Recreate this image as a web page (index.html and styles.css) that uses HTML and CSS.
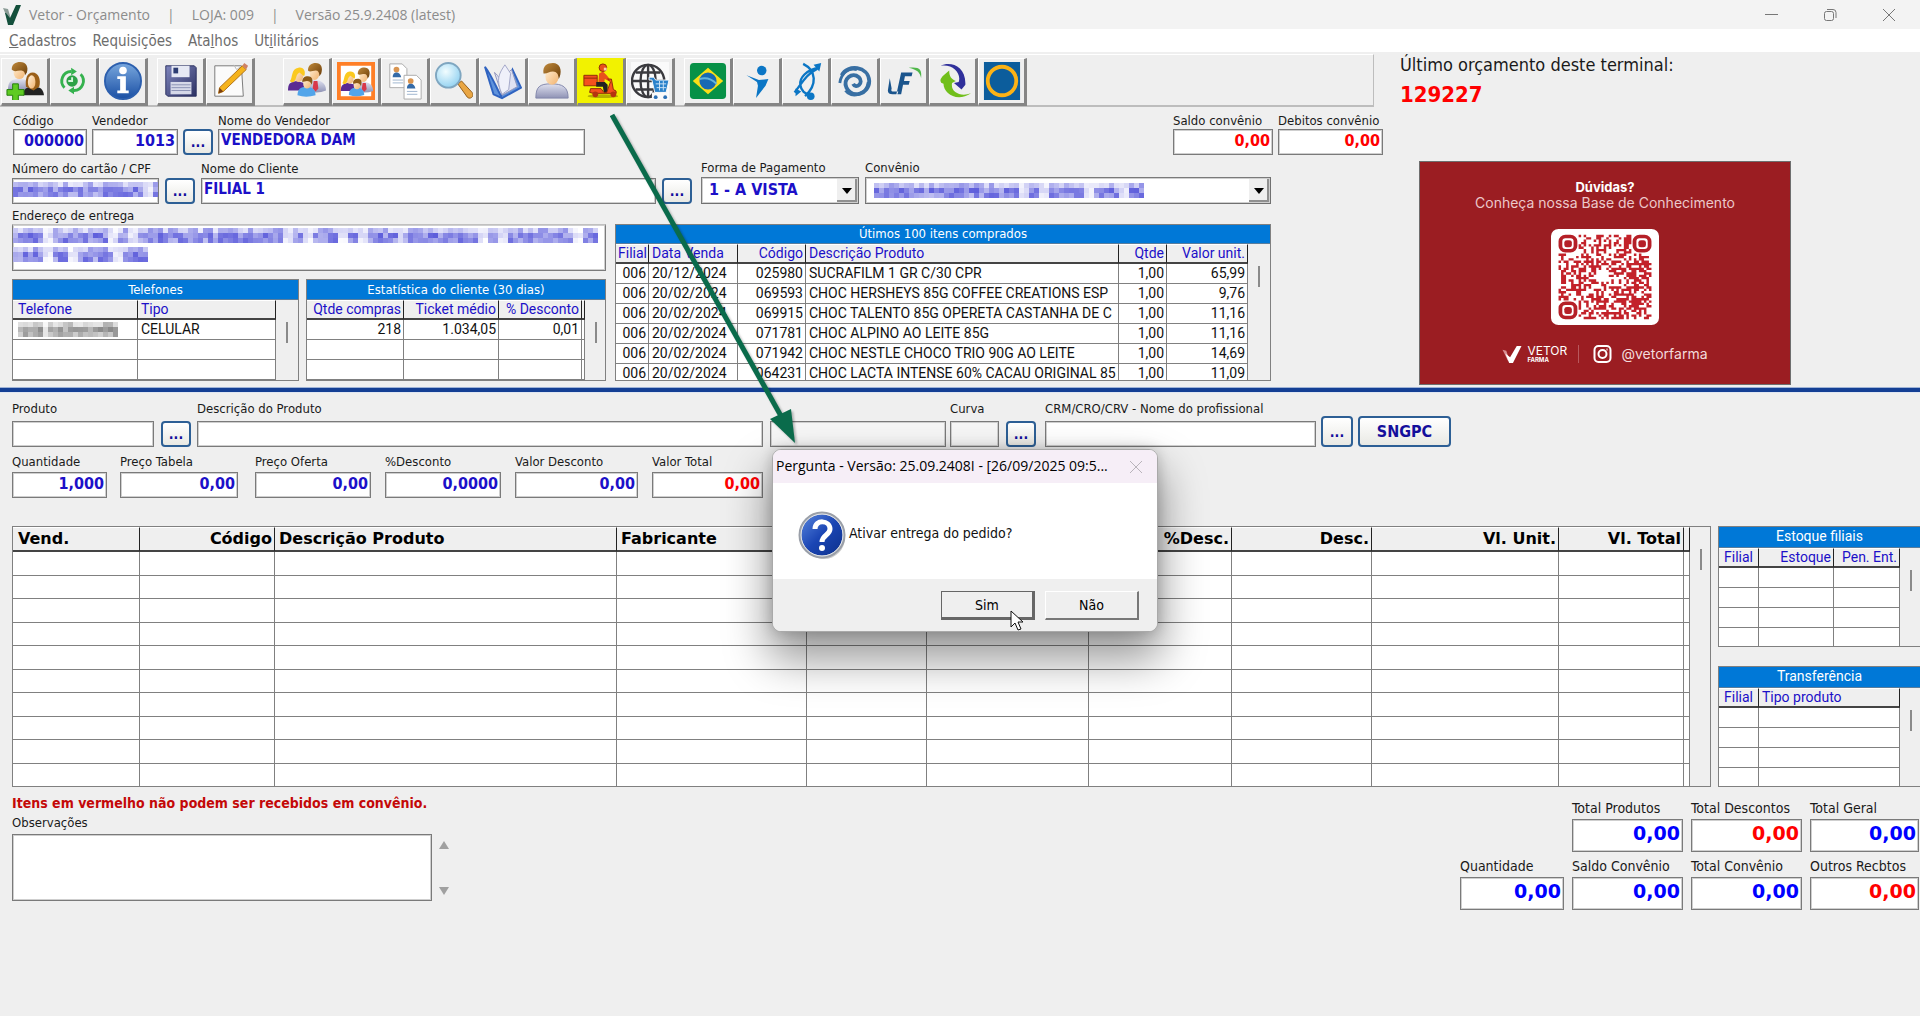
FILE: index.html
```html
<!DOCTYPE html>
<html lang="pt-BR">
<head>
<meta charset="utf-8">
<title>Vetor - Orçamento</title>
<link rel="stylesheet" href="styles.css">
</head>
<body>
<svg class="defs" aria-hidden="true">
  <defs>
    <linearGradient id="shirt" x1="0" y1="0" x2="0" y2="1"><stop offset="0" stop-color="#dfe1ef"/><stop offset="1" stop-color="#8f93b5"/></linearGradient>
    <linearGradient id="hair" x1="0" y1="0" x2="1" y2="1"><stop offset="0" stop-color="#c08a3c"/><stop offset="1" stop-color="#6b3d08"/></linearGradient>
    <linearGradient id="skin" x1="0" y1="0" x2="1" y2="1"><stop offset="0" stop-color="#fff0d8"/><stop offset="1" stop-color="#f2b26c"/></linearGradient>
    <linearGradient id="blueBall" x1="0" y1="0" x2="0" y2="1"><stop offset="0" stop-color="#79a8de"/><stop offset="1" stop-color="#1a4fa4"/></linearGradient>
    <linearGradient id="floppy" x1="0" y1="0" x2="1" y2="1"><stop offset="0" stop-color="#7f86bd"/><stop offset="1" stop-color="#2c3163"/></linearGradient>
    <radialGradient id="lens" cx=".4" cy=".35" r=".7"><stop offset="0" stop-color="#f2fdff"/><stop offset="1" stop-color="#8fd0f0"/></radialGradient>
    <linearGradient id="question" x1="0" y1="0" x2="1" y2="1"><stop offset="0" stop-color="#5c8ae0"/><stop offset=".5" stop-color="#1a45b4"/><stop offset="1" stop-color="#0c2f88"/></linearGradient>
    <g id="family">
      <path d="M19 30c0-8 3-11 9-11s12 3 12 11q-10 4-21 0z" fill="url(#shirt)"/>
      <path d="M27 20h4l1 8-3 3-3-3z" fill="#d8384a"/>
      <ellipse cx="28" cy="12" rx="5" ry="7" fill="url(#skin)"/>
      <path d="M21 9c0-6 4-8 8-8 6 0 8 5 6 11l-2 3c0-4-1-6-4-6s-6 2-8 0z" fill="url(#hair)"/>
      <path d="M0 30c0-7 2-9 9-10l8 2v8z" fill="#5b2a93"/>
      <ellipse cx="11" cy="15" rx="5" ry="6" fill="url(#skin)"/>
      <path d="M2 20c3-3 1-13 9-14 6-1 8 5 6 9l-5-4c-4 2-3 8-6 10-2 1-3 0-4-1z" fill="#fbc91f"/>
      <path d="M10 35c0-7 4-9 9-9s10 2 10 9q-10 3-19 0z" fill="#52a5ea"/>
      <ellipse cx="20" cy="23" rx="4" ry="5" fill="url(#skin)"/>
      <path d="M15 21c0-4 2-6 6-6s6 3 4 9c-1-3-3-4-5-4s-3 1-5 1z" fill="#8d5a16"/>
    </g>
  </defs>
</svg>

<header class="titlebar">
  <svg class="logo" viewBox="0 0 20 22"><path d="M1 4l5 1 3 10-2 3z" fill="#8b9c96"/><path d="M4 9l4 5L14 1h5L11 21H6L3 9z" fill="#14503c"/></svg>
  <span class="app-title">Vetor - Orçamento</span><span>|</span><span class="store">LOJA: 009</span><span>|</span><span>Versão 25.9.2408 (latest)</span>
  <div class="window-buttons">
    <button type="button" aria-label="Minimizar"><svg viewBox="0 0 14 14"><path d="M1 6.500h13" stroke="#777" fill="none"/></svg></button>
    <button type="button" aria-label="Restaurar"><svg viewBox="0 0 14 14"><rect x="1.500" y="3.500" width="9" height="9" rx="2" fill="none" stroke="#777"/><path d="M4 1.500h6q3 0 3 3V10" fill="none" stroke="#777"/></svg></button>
    <button type="button" aria-label="Fechar"><svg viewBox="0 0 14 14"><path d="M1 1l12 12M13 1L1 13" stroke="#777" fill="none"/></svg></button>
  </div>
</header>

<nav class="menubar">
  <a href="#"><u>C</u>adastros</a><a href="#">Requisições</a><a href="#">Ata<u>l</u>hos</a><a href="#">Ut<u>i</u>litários</a>
</nav>

<main>
<section class="top">
  <div class="top-left">
    <div class="toolbar">
      <div class="tool-group">
        <button type="button" aria-label="Novo cliente"><svg viewBox="0 0 40 40"><path d="M2 30c0-10 4-12 12-12s12 2 12 12z" fill="url(#shirt)"/><ellipse cx="14" cy="11" rx="6" ry="7" fill="url(#skin)"/><path d="M6 8c0-6 4-8 9-8 6 0 9 5 7 11l-2 3c0-4-2-5-5-5s-6 2-9-1z" fill="url(#hair)"/><path d="M18 35c0-7 4-9 11-9s10 2 11 9z" fill="#222"/><path d="M21 26c-1-8 1-15 7-15s9 7 7 15l-6 4z" fill="#9a5f18"/><ellipse cx="27" cy="21" rx="4" ry="7" fill="url(#skin)"/><path d="M7 23h6v6h6v6h-6v6H7v-6H1v-6h6z" fill="#5fcb23" stroke="#227c0c"/></svg></button>
        <button type="button" aria-label="Atualizar"><svg viewBox="0 0 40 40"><path d="M10 27a10 10 0 0 1 7-17M27 13a10 10 0 0 1-7 17" fill="none" stroke="#35b24e" stroke-width="3"/><path d="M17 6l6 4-6 4zM20 34l-6-4 6-4z" fill="#35b24e"/><circle cx="18" cy="20" r="6" fill="#2da247"/><path d="M18 16v4h-4" stroke="#d7f5dc" fill="none" stroke-width="2"/></svg></button>
        <button type="button" aria-label="Informações"><svg viewBox="0 0 40 40"><circle cx="20" cy="20" r="19" fill="url(#blueBall)" stroke="#2c5fae" stroke-width="2"/><circle cx="20" cy="9" r="4" fill="#fff"/><path d="M14 15h9v15h3v3H14v-3h3V18h-3z" fill="#fff"/></svg></button>
      </div>
      <div class="tool-group">
        <button type="button" aria-label="Salvar"><svg viewBox="0 0 40 40"><path d="M4 4h30l2 2v30H6l-2-2z" fill="url(#floppy)" stroke="#2b3060"/><path d="M10 4h19v12H10z" fill="#e6e9f4"/><path d="M12 6h5v6h-5z" fill="#2d3d73"/><path d="M9 21h22v13H9z" fill="#d5d8e8"/><path d="M10 24h20M10 27h20M10 30h20" stroke="#8990b3"/></svg></button>
        <button type="button" aria-label="Editar"><svg viewBox="0 0 40 40"><path d="M4 4h28l2 32H4z" fill="#fbfbfb" stroke="#777"/><path d="M24 3l3 5 4-3" fill="none" stroke="#bbb"/><path d="M8 33l1-6L33 4l4 4-24 23z" fill="#f5b31c" stroke="#b06f10"/><path d="M8 33l1-6 4 4z" fill="#7a3e10"/><path d="M33 4l2-3 4 3-2 4z" fill="#cf8264"/></svg></button>
      </div>
      <div class="tool-group">
        <button type="button" aria-label="Família"><svg viewBox="0 0 40 40"><use href="#family"/></svg></button>
        <button type="button" aria-label="Família em destaque"><svg viewBox="0 0 40 40"><path d="M2 2h36v36H2z" fill="#fff" stroke="#ff7f27" stroke-width="4"/><g transform="translate(4 5) scale(.85)"><use href="#family"/></g></svg></button>
        <button type="button" aria-label="Duplicar cadastro"><svg viewBox="0 0 40 40"><g id="page" transform="translate(3 1)"><path d="M1 1h13l5 5v20H1z" fill="#fff" stroke="#aaa"/><circle cx="8" cy="7" r="3" fill="#d99551"/><path d="M4 15q0-5 4-5t5 5z" fill="#346ba8"/><path d="M4 18h11M4 21h11" stroke="#9db4cf"/></g><use href="#page" transform="translate(15 12)"/></svg></button>
        <button type="button" aria-label="Pesquisar"><svg viewBox="0 0 40 40"><path d="M24 23l4-3 11 12c3 4-2 8-5 5z" fill="#e9a644" stroke="#8f5b17"/><circle cx="14" cy="14" r="13" fill="url(#lens)" stroke="#7fa6c0" stroke-width="2"/></svg></button>
        <button type="button" aria-label="Catálogo"><svg viewBox="0 0 40 40"><path d="M1 5l9 29 9 4 20-11L30 8l-8 20-4 8C12 25 8 14 1 5z" fill="#5f93dc" stroke="#2f63c0" stroke-width="2"/><path d="M11 11l8 24L35 26 29 8c-5 4-7 8-9 20-2-8-4-13-9-17z" fill="#dfe2f2" stroke="#9095ba"/><path d="M19 34C12 18 16 12 22 3l6 9-2 17z" fill="#eff0fa" stroke="#a0a4c6"/></svg></button>
        <button type="button" aria-label="Cliente"><svg viewBox="0 0 40 40"><path d="M3 38c0-12 4-15 16-15s18 3 18 15z" fill="url(#shirt)" stroke="#8186aa"/><ellipse cx="20" cy="15" rx="7" ry="9" fill="url(#skin)"/><path d="M11 12c-1-8 4-11 10-11 7 0 10 7 7 15l-1 2c0-5-2-8-6-8s-7 3-10 2z" fill="url(#hair)"/></svg></button>
        <button type="button" class="delivery" aria-label="Entrega"><svg viewBox="0 0 40 40"><ellipse cx="22" cy="36" rx="16" ry="2" fill="#b5b000"/><path d="M2 14h14v11H2z" fill="#f4511e" stroke="#8c2b08"/><path d="M2 17h14" stroke="#8c2b08"/><path d="M18 12l4-2 4 4 4 5-2 1-4-2-1 6h-6z" fill="#e8501c"/><circle cx="22" cy="6" r="4" fill="#e8501c" stroke="#8c2b08"/><path d="M23 6h3v3h-3z" fill="#ffd2a8"/><path d="M15 21h9l3 3v8h-4l-1-6h-7z" fill="#222"/><path d="M9 28h11l3 4h3l4-11-3-3h4l2 11q4 1 3 4H12l-4-1z" fill="#f4511e" stroke="#8c2b08"/><circle cx="14" cy="34" r="3" fill="#b53510"/><circle cx="33" cy="34" r="3" fill="#b53510"/></svg></button>
        <button type="button" aria-label="Loja virtual"><svg viewBox="0 0 40 40"><path d="M0 0h40v40H0z" fill="#fafafa"/><g fill="none" stroke="#3b3b3f" stroke-width="2.500"><circle cx="18" cy="20" r="17"/><ellipse cx="18" cy="20" rx="8" ry="17"/><path d="M18 3v34M2 20h33M5 11h26M5 29h26"/></g><path d="M19 16h5l2 3h14l-3 13H25l-3-13h-3z" fill="#2a82cb" stroke="#fafafa"/><path d="M26 23h11M27 27h10M30 20v10M34 20v10" stroke="#cfe5f7"/><path d="M22 32h17v8H22z" fill="#fafafa"/><circle cx="26" cy="37" r="2" fill="#2a6fb5"/><circle cx="36" cy="37" r="2" fill="#2a6fb5"/></svg></button>
      </div>
      <div class="tool-group">
        <button type="button" aria-label="Brasil"><svg viewBox="0 0 40 40"><rect x="1" y="1" width="38" height="38" rx="4" fill="#079147"/><path d="M20 6l16 14-16 14L4 20z" fill="#fade17"/><circle cx="20" cy="20" r="9" fill="#1769b3"/><path d="M11 18q10-3 18 5" stroke="#63b4dc" stroke-width="2" fill="none"/></svg></button>
        <button type="button" aria-label="Convênio esportivo"><svg viewBox="0 0 40 40"><circle cx="25" cy="9" r="5" fill="#0b76c5"/><path d="M9 14l13 5 10-1-3 7-10 13 2-13-1-4z" fill="#0b76c5"/></svg></button>
        <button type="button" aria-label="Convênio genético"><svg viewBox="0 0 40 40"><path d="M17 2c14 7 15 22 2 34M34 6C20 8 13 17 14 24s5 9 10 11M32 7C20 13 16 22 8 32" fill="none" stroke="#0b76c5" stroke-width="2.500"/><circle cx="25" cy="36" r="4" fill="#0b76c5"/><path d="M28 3l8-2-2 9zM9 28l6 3-6 5z" fill="#0b76c5"/></svg></button>
        <button type="button" aria-label="Convênio espiral"><svg viewBox="0 0 40 40"><path d="M6 14C12 2 34 4 35 20c0 14-18 19-24 7-4-9 6-17 13-11 6 6-3 13-6 7" fill="none" stroke="#386fa3" stroke-width="4"/><path d="M4 22C6 10 14 6 22 8M10 30c6 9 22 5 24-9" fill="none" stroke="#386fa3" stroke-width="3"/></svg></button>
        <button type="button" aria-label="Convênio LF"><svg viewBox="0 0 40 40"><path d="M5 17L3 30c0 3 2 4 5 4h5l1-3H8q-2 0-1-3zM17 11h12l-1 4h-7l-1 5h6l-1 4h-6l-2 10h-5z" fill="#1b558d"/><path d="M25 6c11-1 14 1 13 11-1-6-4-9-13-11z" fill="#4eb748"/></svg></button>
        <button type="button" aria-label="Convênio troca"><svg viewBox="0 0 40 40"><path d="M7 4C17-1 34 4 33 24l-4 5-8-7 5-1C29 12 20 2 7 4z" fill="#30309b"/><path d="M16 9L9 15q-5 6 1 8c0 10 14 20 29 10-11 4-22-1-20-11l4-2c-5-2-7-5-7-11z" fill="#71bf1b"/></svg></button>
        <button type="button" aria-label="Convênio anel"><svg viewBox="0 0 40 40"><path d="M1 0h38v40H1z" fill="#0c5d9c"/><circle cx="20" cy="20" r="15" fill="none" stroke="#fbb216" stroke-width="4"/></svg></button>
      </div>
    </div>

    <form class="seller-row">
      <div class="field w-code"><label for="codigo">Código</label><input id="codigo" class="num" value="000000"></div>
      <div class="field w-seller"><label for="vendedor">Vendedor</label><input id="vendedor" class="num" value="1013"></div>
      <button type="button" class="more" aria-label="Buscar vendedor">...</button>
      <div class="field w-name"><label for="nomevend">Nome do Vendedor</label><input id="nomevend" value="VENDEDORA DAM"></div>
      <div class="field w-balance push"><label for="saldo">Saldo convênio</label><input id="saldo" class="num red" value="0,00"></div>
      <div class="field w-debit"><label for="debitos">Debitos convênio</label><input id="debitos" class="num red" value="0,00"></div>
    </form>

    <form class="client-row">
      <div class="field w-card"><label for="cartao">Número do cartão / CPF</label><div class="masked"><input id="cartao"><svg class="mosaic" data-text="11111111100000 1" data-cols="29"></svg></div></div>
      <button type="button" class="more" aria-label="Buscar cartão">...</button>
      <div class="field grow"><label for="nomecli">Nome do Cliente</label><input id="nomecli" value="FILIAL 1"></div>
      <button type="button" class="more" aria-label="Buscar cliente">...</button>
      <div class="field w-pay"><label for="forma">Forma de Pagamento</label><div class="combo"><select id="forma"><option>1 - A VISTA</option></select><span></span></div></div>
      <div class="field w-plan"><label for="convenio">Convênio</label><div class="combo masked"><select id="convenio"><option></option></select><svg class="mosaic" data-text="0000000000000000 1 0000 000 00" data-cols="54"></svg><span></span></div></div>
    </form>

    <div class="detail">
      <div class="detail-left">
        <div class="field"><label for="endereco">Endereço de entrega</label>
          <div class="masked"><textarea id="endereco"></textarea><svg class="mosaic" data-text="000 000000 0 0000000000000000 1 000 1 000 00000000 1 0000000 00" data-cols="117"></svg><svg class="mosaic second" data-text="000 00 0000 001" data-cols="27"></svg></div></div>
        <div class="client-grids">
          <div class="panel phones"><h2>Telefones</h2><div class="scroller">
            <table><colgroup><col class="c125"><col></colgroup><thead><tr><th>Telefone</th><th>Tipo</th></tr></thead>
            <tbody><tr><td class="masked"><svg class="mosaic gray" data-text="101 0000000000" data-cols="20"></svg></td><td>CELULAR</td></tr><tr><td></td><td></td></tr><tr><td></td><td></td></tr></tbody></table><i class="scroll"></i></div></div>
          <div class="panel stats"><h2>Estatística do cliente (30 dias)</h2><div class="scroller">
            <table><colgroup><col><col class="c95"><col class="c83"><col class="c3"></colgroup><thead><tr><th class="r">Qtde compras</th><th class="r">Ticket médio</th><th class="r">% Desconto</th><th></th></tr></thead>
            <tbody><tr><td class="r">218</td><td class="r">1.034,05</td><td class="r">0,01</td><td></td></tr><tr><td></td><td></td><td></td><td></td></tr><tr><td></td><td></td><td></td><td></td></tr></tbody></table><i class="scroll slim"></i></div></div>
        </div>
      </div>
      <div class="panel recent"><h2>Útimos 100 itens comprados</h2><div class="scroller">
        <table><colgroup><col class="c32"><col class="c89"><col class="c68"><col><col class="c48"><col class="c81"></colgroup>
        <thead><tr><th class="r">Filial</th><th>Data Venda</th><th class="r">Código</th><th>Descrição Produto</th><th class="r">Qtde</th><th class="r">Valor unit.</th></tr></thead>
        <tbody>
        <tr><td class="r">006</td><td>20/12/2024</td><td class="r">025980</td><td>SUCRAFILM 1 GR C/30 CPR</td><td class="r">1,00</td><td class="r">65,99</td></tr>
        <tr><td class="r">006</td><td>20/02/2024</td><td class="r">069593</td><td>CHOC HERSHEYS 85G COFFEE CREATIONS ESP</td><td class="r">1,00</td><td class="r">9,76</td></tr>
        <tr><td class="r">006</td><td>20/02/2024</td><td class="r">069915</td><td>CHOC TALENTO 85G OPERETA CASTANHA DE C</td><td class="r">1,00</td><td class="r">11,16</td></tr>
        <tr><td class="r">006</td><td>20/02/2024</td><td class="r">071781</td><td>CHOC ALPINO AO LEITE 85G</td><td class="r">1,00</td><td class="r">11,16</td></tr>
        <tr><td class="r">006</td><td>20/02/2024</td><td class="r">071942</td><td>CHOC NESTLE CHOCO TRIO 90G AO LEITE</td><td class="r">1,00</td><td class="r">14,69</td></tr>
        <tr><td class="r">006</td><td>20/02/2024</td><td class="r">064231</td><td>CHOC LACTA INTENSE 60% CACAU ORIGINAL 85</td><td class="r">1,00</td><td class="r">11,09</td></tr>
        </tbody></table><i class="scroll"></i></div></div>
    </div>
  </div>

  <aside class="top-right">
    <p class="last-label">Último orçamento deste terminal:</p>
    <p class="last-number">129227</p>
    <div class="banner">
      <strong>Dúvidas?</strong>
      <span class="banner-text">Conheça nossa Base de Conhecimento</span>
      <svg class="qr" viewBox="0 0 43 41" preserveAspectRatio="none"><rect width="43" height="41" rx="3" fill="#fff"/><path id="qr-modules" fill="#c3222a"/>
        <g fill="none" stroke="#b51f27" stroke-width="1.500"><rect x="3.750" y="3.250" width="6" height="6" rx="2"/><rect x="33.250" y="3.250" width="6" height="6" rx="2"/><rect x="3.750" y="31.750" width="6" height="6" rx="2"/></g>
        <g fill="#b51f27"><rect x="5.300" y="4.800" width="3" height="3" rx="1"/><rect x="34.800" y="4.800" width="3" height="3" rx="1"/><rect x="5.300" y="33.300" width="3" height="3" rx="1"/></g></svg>
      <div class="brands">
        <svg class="brand-v" viewBox="0 0 20 20"><path d="M0 5l4 1 3 9-1 2z" fill="#d98f93"/><path d="M3 9l5 4 7-12h5l-9 18H7z" fill="#fff"/></svg>
        <span class="brand-name">VETOR<small>FARMA</small></span>
        <svg class="insta" viewBox="0 0 20 20" fill="none" stroke="#fff" stroke-width="2"><rect x="2" y="2" width="16" height="16" rx="4"/><circle cx="10" cy="10" r="4"/><path d="M14 5.500h1"/></svg>
        <span class="handle">@vetorfarma</span>
      </div>
    </div>
  </aside>
</section>

<section class="product">
  <form class="product-row">
    <div class="field w-product"><label for="produto">Produto</label><input id="produto"></div>
    <button type="button" class="more narrow" aria-label="Buscar produto">...</button>
    <div class="field w-desc"><label for="descricao">Descrição do Produto</label><input id="descricao"></div>
    <div class="field w-extra"><input aria-label="Complemento"></div>
    <div class="field w-curve"><label for="curva">Curva</label><input id="curva"></div>
    <button type="button" class="more" aria-label="Ver curva">...</button>
    <div class="field w-crm"><label for="crm">CRM/CRO/CRV - Nome do profissional</label><input id="crm"></div>
    <button type="button" class="more tall" aria-label="Buscar profissional">...</button>
    <button type="button" class="more tall sngpc">SNGPC</button>
  </form>
  <form class="price-row">
    <div class="field w95"><label for="qtd">Quantidade</label><input id="qtd" class="num" value="1,000"></div>
    <div class="field w118"><label for="ptab">Preço Tabela</label><input id="ptab" class="num" value="0,00"></div>
    <div class="field w116"><label for="pof">Preço Oferta</label><input id="pof" class="num" value="0,00"></div>
    <div class="field w116"><label for="pdesc">%Desconto</label><input id="pdesc" class="num" value="0,0000"></div>
    <div class="field w123"><label for="vdesc">Valor Desconto</label><input id="vdesc" class="num" value="0,00"></div>
    <div class="field w111"><label for="vtot">Valor Total</label><input id="vtot" class="num red" value="0,00"></div>
  </form>
</section>

<section class="items">
  <div class="panel order"><div class="scroller">
    <table><colgroup><col class="c127"><col class="c135"><col><col class="c190"><col class="c120"><col class="c162"><col class="c143"><col class="c140"><col class="c187"><col class="c125"><col class="c5"></colgroup>
    <thead><tr><th>Vend.</th><th class="r">Código</th><th>Descrição Produto</th><th>Fabricante</th><th></th><th></th><th class="r">%Desc.</th><th class="r">Desc.</th><th class="r">Vl. Unit.</th><th class="r">Vl. Total</th><th></th></tr></thead>
    <tbody id="order-rows"></tbody></table><i class="scroll slim"></i></div></div>
  <div class="side">
    <div class="panel open"><h2>Estoque filiais</h2><div class="scroller">
      <table><colgroup><col class="c39"><col><col class="c66"></colgroup><thead><tr><th class="c">Filial</th><th class="r">Estoque</th><th class="r">Pen. Ent.</th></tr></thead>
      <tbody><tr><td></td><td></td><td></td></tr><tr><td></td><td></td><td></td></tr><tr><td></td><td></td><td></td></tr><tr><td></td><td></td><td></td></tr></tbody></table><i class="scroll slim"></i></div></div>
    <div class="panel open"><h2>Transferência</h2><div class="scroller">
      <table><colgroup><col class="c39"><col></colgroup><thead><tr><th class="c">Filial</th><th>Tipo produto</th></tr></thead>
      <tbody><tr><td></td><td></td></tr><tr><td></td><td></td></tr><tr><td></td><td></td></tr><tr><td></td><td></td></tr></tbody></table><i class="scroll slim"></i></div></div>
  </div>
</section>

<footer class="bottom">
  <div class="notes">
    <p class="warning">Itens em vermelho não podem ser recebidos em convênio.</p>
    <label for="obs">Observações</label>
    <div class="notes-box"><textarea id="obs"></textarea><div class="spin"><svg viewBox="0 0 12 8"><path d="M6 0l5 8H1z"/></svg><svg viewBox="0 0 12 8"><path d="M6 8l5-8H1z"/></svg></div></div>
  </div>
  <form class="totals">
    <div class="field second-col"><label for="t1">Total Produtos</label><input id="t1" class="num" value="0,00"></div>
    <div class="field"><label for="t2">Total Descontos</label><input id="t2" class="num red" value="0,00"></div>
    <div class="field"><label for="t3">Total Geral</label><input id="t3" class="num" value="0,00"></div>
    <div class="field"><label for="t4">Quantidade</label><input id="t4" class="num" value="0,00"></div>
    <div class="field"><label for="t5">Saldo Convênio</label><input id="t5" class="num" value="0,00"></div>
    <div class="field"><label for="t6">Total Convênio</label><input id="t6" class="num" value="0,00"></div>
    <div class="field"><label for="t7">Outros Recbtos</label><input id="t7" class="num red" value="0,00"></div>
  </form>
</footer>
</main>

<div class="dialog" role="dialog" aria-label="Pergunta">
  <div class="dialog-title"><span>Pergunta - Versão: 25.09.2408I - [26/09/2025 09:5...</span>
    <button type="button" aria-label="Fechar pergunta"><svg viewBox="0 0 14 14"><path d="M1 1l12 12M13 1L1 13" stroke="#b9b4bb" fill="none"/></svg></button></div>
  <div class="dialog-body">
    <svg class="ask" viewBox="0 0 48 48"><ellipse cx="26" cy="27" rx="21" ry="21" fill="#0003"/><circle cx="24" cy="24" r="22" fill="url(#question)" stroke="#9a9fa8" stroke-width="3"/><circle cx="24" cy="24" r="21" fill="none" stroke="#e8ebf0"/><path d="M17 18c0-10 15-9 15 0 0 6-8 6-8 13" fill="none" stroke="#fff" stroke-width="5"/><circle cx="24" cy="37" r="3" fill="#fff"/></svg>
    <span>Ativar entrega do pedido?</span></div>
  <div class="dialog-actions"><button type="button" class="default">Sim</button><button type="button">Não</button></div>
  <svg class="cursor" viewBox="0 0 14 21"><path d="M1 1v16l4-4 3 7 3-1-3-7h5z" fill="#fff" stroke="#111"/></svg>
</div>
<svg class="pointer" viewBox="0 0 190 335"><path d="M2 2L171 303" stroke="#0a6b4b" stroke-width="5" fill="none"/><path d="M160 306l21-10 4 34z" fill="#0a6b4b"/></svg>
<script src="script.js"></script>
</body>
</html>
```
FILE: styles.css
```css
* { box-sizing: border-box; }
body {
  margin: 0;
  min-height: 100vh;
  position: relative;
  overflow-x: hidden;
  background: #efefef;
  color: #1a1a1a;
  font-family: "DejaVu Sans Condensed", "DejaVu Sans", sans-serif;
  font-size: 13px;
  line-height: 18px;
}
p, h2 { margin: 0; }
button, input, select, textarea { font: inherit; margin: 0; border-radius: 0; }
a { color: inherit; text-decoration: none; }
.defs { position: absolute; width: 0; height: 0; }

/* title bar and menu */
.titlebar {
  display: flex; align-items: center; height: 29px; padding-left: 2px;
  background: #f3f3f3; color: #8c8c8c;
  font: 14px/29px "Open Sans", sans-serif;
}
.logo { width: 20px; height: 22px; margin-right: 7px; }
.titlebar > span { margin-right: 17px; white-space: nowrap; }
.window-buttons { display: flex; gap: 25px; margin-left: auto; padding-right: 14px; }
.window-buttons button { width: 34px; height: 29px; padding: 0; border: 0; background: none; }
.window-buttons svg { width: 14px; height: 14px; display: block; margin: auto; }
.menubar {
  display: flex; gap: 16px; height: 23px; padding-left: 9px;
  background: #fff; color: #6d6d6d; font-size: 15px; line-height: 24px;
}

/* toolbar */
.top { display: flex; height: 336px; }
.top-left { flex: 1; min-width: 0; padding-top: 2px; }
.toolbar {
  display: flex; height: 53px; margin-right: 10px; padding: 3px 0 0 1px;
  border: 1px solid #bdbdbd; border-width: 1px 1px 2px 0; border-top-color: #fff;
}
.tool-group { display: flex; margin-right: 9px; }
.tool-group:nth-child(2) { margin-right: 28px; }
.tool-group button {
  width: 49px; height: 48px; padding: 3px 4px; background: #efefef;
  border: 1px solid #fff; border-right: 3px solid #858585; border-bottom: 3px solid #858585;
}
.tool-group .delivery { background: #f2f200; border-color: #f2f200 #858585 #858585 #f2f200; }
.tool-group svg { display: block; width: 38px; height: 38px; }

/* form fields */
.field { display: flex; flex-direction: column; flex: none; }
.field label { height: 18px; white-space: nowrap; width: 0; }
input, textarea, select { width: 100%; border: 1px solid #7a7a7a; background: #fff; color: #1c10c8; font-weight: bold; outline: 1px solid #cfcfcf; outline-offset: -2px; }
input { height: 26px; padding: 0 2px 4px 2px; font-size: 15px; display: block; }
textarea { resize: none; display: block; }
.num { text-align: right; font-size: 16px; }
input.red { color: #f00; }
.more {
  flex: none; width: 30px; height: 26px; padding: 0; border: 2px solid #2d5f95; border-radius: 4px;
  background: linear-gradient(#fff, #e9e9e4); color: #140f9c; font-weight: bold; font-size: 14px; line-height: 22px;
}
.seller-row, .client-row { display: flex; align-items: flex-end; }
.seller-row label { line-height: 20px; }
.seller-row { margin-top: 4px; padding: 0 1px 0 13px; gap: 5px; }
.client-row { margin-top: 4px; padding: 0 113px 0 12px; gap: 6px; }
.w-code { width: 74px; }
.w-seller { width: 86px; }
.w-name { width: 367px; }
.w-balance { width: 100px; }
.w-debit { width: 105px; }
.push { margin-left: auto; }
.w-card { width: 147px; }
.grow { flex: 1; min-width: 0; }
.w-pay { width: 158px; margin-left: 3px; }
.w-plan { width: 406px; }
.masked { position: relative; }
.mosaic { position: absolute; left: 1px; top: 4px; height: 15px; }
.mosaic.second { top: 23px; }
.mosaic.gray { left: 5px; top: 2px; }
.combo .mosaic { left: 9px; top: 6px; }
.combo { position: relative; }
.combo select { height: 27px; padding: 0 7px; appearance: none; font-size: 16px; border-right: 2px solid #707070; border-bottom: 2px solid #707070; }
.combo span {
  position: absolute; right: 2px; top: 2px; width: 20px; height: 23px; background: #efefef;
  border-right: 2px solid #909090; border-bottom: 2px solid #909090; pointer-events: none;
}
.combo span::after { content: ""; position: absolute; left: 5px; top: 9px; border: 5px solid transparent; border-top: 6px solid #000; border-bottom: 0; }

/* grids */
.panel { border: 1px solid #808080; background: #efefef; overflow: hidden; color: #111; font-family: Roboto, "Liberation Sans", sans-serif; font-size: 14px; }
.panel h2 { height: 20px; background: #0078d7; color: #fff; font: 13px/19px "DejaVu Sans Condensed", sans-serif; text-align: center; border-bottom: 1px solid #5a7d9c; }
.scroller { display: flex; }
table { flex: 1; min-width: 0; width: 0; table-layout: fixed; border-spacing: 0; background: #fff; }
th, td { height: 20px; padding: 0 3px; line-height: 17px; white-space: nowrap; overflow: hidden; text-align: left; border-right: 1px solid #808080; border-bottom: 1px solid #808080; }
th { font-weight: normal; color: #1c10c8; background: #efefef; border-right-color: #222; border-bottom: 2px solid #444; border-top: 1px solid #fff; }
th:first-child, td:first-child { padding-left: 5px; }
.r { text-align: right; padding: 0 2px; }
th.r:first-child, td.r:first-child, th.c { padding: 0 2px; }
.c { text-align: center; }
.scroll { width: 22px; flex: none; }
.scroll.slim { width: 20px; }
.scroll::after { content: ""; display: block; width: 2px; height: 21px; margin: 22px 0 0 10px; background: #8a8a8a; }
.c3 { width: 3px; } .c5 { width: 6px; } .c32 { width: 33px; } .c39 { width: 40px; } .c48 { width: 48px; }
.c66 { width: 66px; } .c68 { width: 68px; } .c81 { width: 81px; } .c83 { width: 83px; } .c89 { width: 89px; }
.c95 { width: 95px; } .c120 { width: 120px; } .c125 { width: 125px; } .c127 { width: 127px; } .c135 { width: 135px; }
.c140 { width: 140px; } .c143 { width: 143px; } .c162 { width: 162px; } .c187 { width: 187px; } .c190 { width: 190px; }
.detail { display: flex; align-items: flex-end; gap: 9px; margin-top: 2px; padding: 0 113px 0 12px; }
.detail-left { width: 594px; }
.detail-left label { line-height: 20px; }
.detail textarea { height: 47px; margin-bottom: 8px; border-top: 2px solid #c0c0c0; }
.client-grids { display: flex; gap: 7px; }
.client-grids .panel { height: 102px; }
.phones { width: 287px; }
.stats { flex: 1; }
.recent { flex: 1; height: 157px; }
.recent h2 { height: 19px; line-height: 18px; }

/* right column */
.top-right { width: 536px; padding: 3px 0 0 16px; }
.last-label { font-size: 18px; line-height: 20px; }
.last-number { color: #f00; font-weight: bold; font-size: 22px; line-height: 24px; margin-top: 8px; }
.banner {
  display: flex; flex-direction: column; align-items: center; width: 372px; height: 224px;
  margin: 54px 0 0 19px; padding-top: 17px; background: #9b1d22; border: 1px solid #6e6e6e; color: #fff;
  font-family: Inter, "Open Sans", sans-serif; font-size: 14px; line-height: 16px;
}
.banner strong { font-size: 13px; }
.banner-text { color: #ecc8ca; }
.qr { width: 108px; height: 96px; margin-top: 18px; }
.brands { display: flex; align-items: center; margin-top: 19px; height: 20px; }
.brand-v { width: 20px; height: 19px; }
.brand-name { width: 52px; margin: 0 13px 0 5px; border-right: 1px solid #b8585d; font-size: 12px; line-height: 12px; }
.brand-name small { display: block; font-size: 6px; line-height: 6px; font-weight: bold; }
.insta { width: 21px; height: 20px; }
.handle { margin-left: 8px; font-size: 14px; color: #f3dadb; }

/* product entry */
.product { border-top: 4px solid #143f94; box-shadow: 0 -1px #9fb3d6, inset 0 1px #dfe6f2; padding: 7px 0 0 12px; }
.product-row, .price-row { display: flex; align-items: flex-end; }
.product-row label, .price-row label { line-height: 19px; }
.product-row input { margin-top: 4px; }
.w-product { width: 142px; }
.w-desc { width: 566px; margin-left: 6px; }
.narrow { margin-left: 7px; }
.w-extra { width: 176px; margin-left: 7px; }
.w-curve { width: 49px; margin: 0 7px 0 4px; }
.w-crm { width: 271px; margin: 0 5px 0 9px; }
.more.tall { height: 31px; width: 32px; }
.more.sngpc { width: 93px; margin-left: 5px; font-size: 16px; }
.w-extra input, .w-curve input { background: #f6f6f6; }
.price-row { margin-top: 5px; }
.price-row label { margin-bottom: 2px; }
.w95 { width: 95px; margin-right: 13px; }
.w118 { width: 118px; margin-right: 17px; }
.w116 { width: 116px; margin-right: 14px; }
.w123 { width: 123px; margin-right: 14px; }
.w111 { width: 111px; }

/* order grid */
.items { display: flex; gap: 7px; margin-top: 28px; padding-left: 12px; }
.order { flex: 1; min-width: 0; height: 261px; font-family: "DejaVu Sans", sans-serif; }
.order th { height: 25px; color: #000; font-weight: bold; font-size: 16px; line-height: 22px; }
.order th:nth-child(3), .order th:nth-child(4) { padding-left: 4px; }
.order td { height: 24px; }
.order tr:nth-child(even) td { height: 23px; }
.side { width: 202px; }
.side .panel { height: 121px; border-right: 0; }
.side .panel + .panel { margin-top: 19px; }
.side h2 { height: 21px; font-family: Roboto, sans-serif; font-size: 14px; }

/* footer */
.bottom { display: flex; justify-content: space-between; padding: 6px 1px 0 12px; }
.warning { color: #c40808; font-weight: bold; font-size: 14px; line-height: 20px; }
.notes > label { display: block; line-height: 20px; }
.notes-box { display: flex; }
.notes-box textarea { width: 420px; height: 67px; margin-top: 1px; }
.spin { display: flex; flex-direction: column; justify-content: space-between; padding: 8px 0 6px 6px; }
.spin svg { width: 12px; height: 8px; fill: #a0a0a0; }
.totals { display: grid; grid-template-columns: 104px 111px 111px 109px; gap: 5px 8px; padding-top: 6px; }
.totals .second-col { grid-column: 2; }
.totals label { margin-bottom: 2px; font-size: 14px; }
.totals input { height: 33px; font-family: "DejaVu Sans", sans-serif; font-size: 19px; padding-bottom: 6px; color: #00f; }
.totals input.red { color: #f00; }

/* question dialog */
.dialog {
  position: absolute; left: 772px; top: 449px; width: 386px; height: 183px; border: 1px solid #a9a9a9; border-radius: 9px;
  background: #fff; color: #111; font-size: 14px; box-shadow: 0 24px 44px 4px #0006, 0 0 14px #0003;
  display: flex; flex-direction: column;
}
.dialog-title { display: flex; justify-content: space-between; height: 33px; padding: 0 14px 0 3px; border-radius: 8px 8px 0 0; background: #f6eef7; font: 14px/32px "Open Sans", sans-serif; color: #000; }
.dialog-title button { width: 14px; padding: 0; border: 0; background: none; }
.dialog-title svg { display: block; width: 14px; height: 14px; }
.dialog-body { flex: 1; display: flex; align-items: center; padding: 8px 0 0 25px; }
.dialog-body span { margin: -4px 0 0 3px; }
.ask { width: 48px; height: 48px; }
.dialog-actions { display: flex; justify-content: flex-end; gap: 10px; height: 52px; padding: 12px 18px; background: #efefef; border-radius: 0 0 8px 8px; }
.dialog-actions button { width: 94px; height: 29px; background: #efefef; border: 1px solid #fff; border-right: 2px solid #777; border-bottom: 2px solid #777; }
.dialog-actions .default { border: 1px solid #666; border-right: 3px solid #666; border-bottom: 3px solid #666; }
.cursor { position: absolute; left: 237px; top: 160px; width: 14px; height: 21px; }
.pointer { position: absolute; left: 610px; top: 113px; width: 190px; height: 335px; filter: drop-shadow(2px 2px 1px #0004); pointer-events: none; }
```
FILE: script.js
```js
// Small seeded generator so that the drawn patterns are stable.
function seeded(seed) {
  return function () {
    seed = (seed * 1103515245 + 12345) % 2147483648;
    return seed / 2147483648;
  };
}

// Privacy mosaic over personal data: 5px cells shaped by a rough word pattern.
document.querySelectorAll('.mosaic').forEach(function (svg, n) {
  var rnd = seeded(77 + n * 31);
  var text = svg.dataset.text, cols = +svg.dataset.cols;
  var gray = svg.classList.contains('gray');
  var out = '';
  for (var c = 0; c < cols; c++) {
    var gap = text[Math.floor(c * text.length / cols)] === ' ';
    for (var r = 0; r < 3; r++) {
      var v = rnd() * (gap ? 0.25 : 0.5) + (gap ? 0 : [0.1, 0.4, 0.35][r]);
      var a = Math.round(255 - v * (gray ? 130 : 180));
      var b = gray ? a : Math.round(255 - v * 40);
      out += '<rect x="' + c * 5 + '" y="' + r * 5 + '" width="5" height="5" fill="rgb(' + a + ',' + a + ',' + b + ')"/>';
    }
  }
  svg.setAttribute('width', cols * 5);
  svg.innerHTML = out;
});

// QR modules, leaving the three finder corners free.
(function () {
  var rnd = seeded(4021), d = '';
  for (var y = 0; y < 36; y++) {
    for (var x = 0; x < 37; x++) {
      var corner = (x < 8 && y < 8) || (x > 28 && y < 8) || (x < 8 && y > 27);
      var centre = Math.abs(x - 17) < 3 && Math.abs(y - 17) < 3;
      if (rnd() < 0.52 && !corner && !centre) d += 'M' + (x + 3) + ' ' + (y + 2.5) + 'h1v1h-1z';
    }
  }
  document.getElementById('qr-modules').setAttribute('d', d);
})();

// Empty lines of the order grid.
document.getElementById('order-rows').innerHTML = ('<tr>' + '<td></td>'.repeat(11) + '</tr>').repeat(10);
```
